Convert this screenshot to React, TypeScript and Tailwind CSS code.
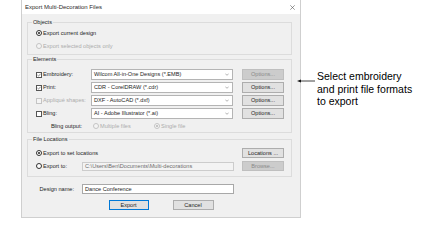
const ink = "text-[#1e1e1e]";

const Radio = ({ checked = false, disabled = false }: { checked?: boolean; disabled?: boolean }) => (
  <span
    className={`flex h-[6px] w-[6px] shrink-0 items-center justify-center rounded-full border ${
      disabled ? "border-[#c4c4c4] bg-[#f4f4f4]" : "border-[#333] bg-white"
    }`}
  >
    {checked && (
      <span className={`h-[2px] w-[2px] rounded-full ${disabled ? "bg-[#b4b4b4]" : "bg-[#222]"}`} />
    )}
  </span>
);

const Checkbox = ({ checked = false, disabled = false }: { checked?: boolean; disabled?: boolean }) => (
  <span
    className={`flex h-[6px] w-[6px] shrink-0 items-center justify-center border ${
      disabled ? "border-[#c4c4c4] bg-[#f4f4f4]" : "border-[#555] bg-white"
    }`}
  >
    {checked && (
      <svg width="4" height="4" viewBox="0 0 4 4">
        <path d="M0.4 2 L1.5 3.1 L3.7 0.7" fill="none" stroke="#333" strokeWidth="0.55" />
      </svg>
    )}
  </span>
);

const Button = ({ label, disabled = false, primary = false, className = "" }: { label: string; disabled?: boolean; primary?: boolean; className?: string }) => (
  <div
    className={`flex items-center justify-center border ${
      disabled
        ? "border-[#bfbfbf] bg-[#cccccc] text-[#8a8a8a]"
        : primary
          ? "border-[#0078d7] bg-[#e1e1e1] text-[#1e1e1e]"
          : "border-[#adadad] bg-[#e1e1e1] text-[#1e1e1e]"
    } ${className}`}
  >
    {label}
  </div>
);

const Select = ({ value }: { value: string }) => (
  <div className="flex h-[11px] w-[142px] items-center justify-between border border-[#b4b4b4] bg-white pl-[2px] pr-[3px]">
    <span className={ink}>{value}</span>
    <svg width="4" height="3" viewBox="0 0 4 3">
      <path d="M0.3 0.6 L2 2.3 L3.7 0.6" fill="none" stroke="#808080" strokeWidth="0.6" />
    </svg>
  </div>
);

const elementRows = [
  { label: "Embroidery:", checked: true, disabled: false, value: "Wilcom All-in-One Designs (*.EMB)", optionsDisabled: true },
  { label: "Print:", checked: true, disabled: false, value: "CDR - CorelDRAW (*.cdr)", optionsDisabled: false },
  { label: "Appliqué shapes:", checked: false, disabled: true, value: "DXF - AutoCAD (*.dxf)", optionsDisabled: false },
  { label: "Bling:", checked: false, disabled: false, value: "AI - Adobe Illustrator (*.ai)", optionsDisabled: false },
];

const Group = ({ title, className = "", children }: { title: string; className?: string; children: React.ReactNode }) => (
  <fieldset className={`w-[265px] border border-[#dcdcdc] ${className}`}>
    <legend className={`ml-[4px] px-[1px] leading-[9px] ${ink}`}>{title}</legend>
    {children}
  </fieldset>
);

const App = () => {
  return (
    <main className="relative h-[234px] w-[425px] bg-white font-['Liberation_Sans',Arial,sans-serif] text-[5.6px] leading-[7px]">
      <div className="ml-[21px] w-[280px] border-x border-b border-[#cfcfcf]">
        <div className="flex h-[14px] items-center justify-between bg-white pl-[3px] pr-[5px]">
          <span className="text-[6px] text-[#2a2a2a]">Export Multi-Decoration Files</span>
          <svg width="5" height="5" viewBox="0 0 5 5">
            <path d="M0.3 0.3 L4.7 4.7 M4.7 0.3 L0.3 4.7" stroke="#555" strokeWidth="0.6" />
          </svg>
        </div>

        <div className="flex h-[203px] flex-col bg-[#f0f0f0] pl-[5px] pt-[4px]">
          <Group title="Objects">
            <div className="flex flex-col gap-[1px] pb-[2px] pl-[8px]">
              <div className="flex h-[12px] items-center gap-[1px]">
                <Radio checked />
                <span className={ink}>Export current design</span>
              </div>
              <div className="flex h-[12px] items-center gap-[1px]">
                <Radio disabled />
                <span className="text-[#acacac]">Export selected objects only</span>
              </div>
            </div>
          </Group>

          <Group title="Elements">
            <div className="flex flex-col gap-[2px] pb-[1px] pl-[8px] pt-[5px]">
              {elementRows.map((row) => (
                <div key={row.label} className="flex h-[11px] items-center">
                  <div className="flex w-[55px] items-center gap-[1px]">
                    <Checkbox checked={row.checked} disabled={row.disabled} />
                    <span className={row.disabled ? "text-[#acacac]" : ink}>{row.label}</span>
                  </div>
                  <Select value={row.value} />
                  <Button label="Options..." disabled={row.optionsDisabled} className="ml-[9px] h-[11px] w-[42px]" />
                </div>
              ))}
              <div className="flex h-[10px] items-center">
                <span className={`w-[46px] text-right ${ink}`}>Bling output:</span>
                <div className="ml-[11px] flex w-[61px] items-center gap-[1px]">
                  <Radio disabled />
                  <span className="text-[#acacac]">Multiple files</span>
                </div>
                <div className="flex items-center gap-[1px]">
                  <Radio checked disabled />
                  <span className="text-[#acacac]">Single file</span>
                </div>
              </div>
            </div>
          </Group>

          <Group title="File Locations" className="mt-[2px]">
            <div className="flex flex-col gap-[3px] pb-[5px] pl-[8px] pt-[4px]">
              <div className="flex h-[10px] items-center">
                <div className="flex w-[206px] items-center gap-[1px]">
                  <Radio checked />
                  <span className={ink}>Export to set locations</span>
                </div>
                <Button label="Locations ..." className="h-[10px] w-[42px]" />
              </div>
              <div className="flex h-[10px] items-center">
                <div className="flex w-[46px] items-center gap-[1px]">
                  <Radio />
                  <span className={ink}>Export to:</span>
                </div>
                <div className="flex h-[9px] w-[152px] items-center border border-[#cccccc] bg-[#f3f3f3] pl-[2px] text-[#6d6d6d]">
                  C:\Users\Ben\Documents\Multi-decorations
                </div>
                <Button label="Browse..." disabled className="ml-[8px] h-[10px] w-[42px]" />
              </div>
            </div>
          </Group>

          <div className="mt-[7px] flex h-[10px] items-center">
            <span className={`w-[47px] text-right ${ink}`}>Design name:</span>
            <div className={`ml-[8px] flex h-[10px] w-[152px] items-center border border-[#a8a8a8] bg-white pl-[2px] ${ink}`}>
              Dance Conference
            </div>
          </div>

          <div className="mt-[6px] flex justify-center gap-[24px] pr-[5px]">
            <Button label="Export" primary className="h-[10px] w-[40px]" />
            <Button label="Cancel" className="h-[10px] w-[41px]" />
          </div>
        </div>
      </div>

      <div className="absolute left-[296px] top-[70px] flex items-start">
        <svg width="21" height="14" viewBox="0 0 21 14" className="shrink-0">
          <path d="M4 11 L19 11" stroke="#111" strokeWidth="0.8" />
          <path d="M1 11 L5 9.5 L5 12.5 Z" fill="#111" />
        </svg>
        <p className="text-[10.5px] leading-[12.5px] text-black">
          Select embroidery
          <br />
          and print file formats
          <br />
          to export
        </p>
      </div>
    </main>
  );
};

export default App;
